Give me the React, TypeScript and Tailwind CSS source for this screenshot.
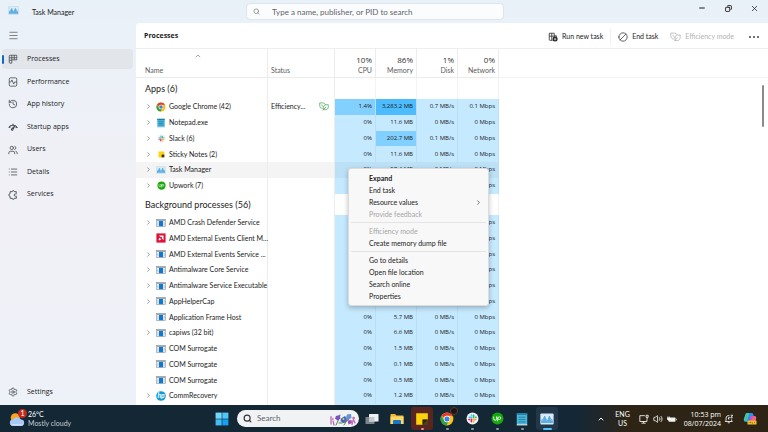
import type { ReactNode } from 'react';
import { clsx } from 'clsx';
import {
  Ban,
  ChevronRight,
  ChevronUp,
  Copy,
  History,
  List,
  Menu,
  Minus,
  Search,
  Settings,
  Users,
  Volume2,
  X,
} from 'lucide-react';

type Heat = 'low' | 'mid' | 'high';
type AppIcon = 'chrome' | 'notepad' | 'slack' | 'sticky' | 'taskmgr' | 'upwork' | 'exe' | 'amd' | 'hp';

interface Process {
  name: string;
  icon: AppIcon;
  expandable?: boolean;
  hovered?: boolean;
  status?: string;
  cpu?: string;
  memory: string;
  disk?: string;
  network?: string;
  cpuHeat?: Heat;
  memoryHeat?: Heat;
}

const APPS: Process[] = [
  {
    name: 'Google Chrome (42)',
    icon: 'chrome',
    expandable: true,
    status: 'Efficiency...',
    cpu: '1.4%',
    memory: '3,283.2 MB',
    disk: '0.7 MB/s',
    network: '0.1 Mbps',
    cpuHeat: 'mid',
    memoryHeat: 'high',
  },
  { name: 'Notepad.exe', icon: 'notepad', expandable: true, memory: '11.6 MB' },
  {
    name: 'Slack (6)',
    icon: 'slack',
    expandable: true,
    memory: '202.7 MB',
    disk: '0.1 MB/s',
    memoryHeat: 'mid',
  },
  { name: 'Sticky Notes (2)', icon: 'sticky', expandable: true, memory: '11.6 MB' },
  { name: 'Task Manager', icon: 'taskmgr', expandable: true, hovered: true, memory: '57.4 MB' },
  { name: 'Upwork (7)', icon: 'upwork', expandable: true, memory: '48.2 MB' },
];

const BACKGROUND: Process[] = [
  { name: 'AMD Crash Defender Service', icon: 'exe', expandable: true, memory: '0.5 MB' },
  { name: 'AMD External Events Client M...', icon: 'amd', memory: '1.6 MB' },
  { name: 'AMD External Events Service ...', icon: 'exe', expandable: true, memory: '0.6 MB' },
  { name: 'Antimalware Core Service', icon: 'exe', expandable: true, memory: '3.4 MB' },
  { name: 'Antimalware Service Executable', icon: 'exe', expandable: true, memory: '98.1 MB' },
  { name: 'AppHelperCap', icon: 'exe', expandable: true, memory: '2.1 MB' },
  { name: 'Application Frame Host', icon: 'exe', memory: '5.7 MB' },
  { name: 'capiws (32 bit)', icon: 'exe', expandable: true, memory: '6.6 MB' },
  { name: 'COM Surrogate', icon: 'exe', memory: '1.5 MB' },
  { name: 'COM Surrogate', icon: 'exe', memory: '0.1 MB' },
  { name: 'COM Surrogate', icon: 'exe', memory: '0.5 MB' },
  { name: 'CommRecovery', icon: 'hp', expandable: true, memory: '1.2 MB' },
];

const METRICS = [
  { label: 'CPU', total: '10%' },
  { label: 'Memory', total: '86%' },
  { label: 'Disk', total: '1%' },
  { label: 'Network', total: '0%' },
];

/* Icons */

interface IconProps {
  className?: string;
}

function ChromeIcon({ className }: IconProps) {
  return (
    <svg viewBox="0 0 24 24" className={className} aria-hidden="true">
      <circle cx="12" cy="12" r="11" fill="#fbc116" />
      <path d="M2.5 6.5A11 11 0 0 1 21.5 6.5H12a5.5 5.5 0 0 0-5 3.5z" fill="#e33b2e" />
      <path d="M2.5 6.5 7.2 14.7A5.5 5.5 0 0 0 14 17.1L11.2 23A11 11 0 0 1 2.5 6.5z" fill="#2ba24c" />
      <circle cx="12" cy="12" r="5.5" fill="#fff" />
      <circle cx="12" cy="12" r="4.3" fill="#3b7ded" />
    </svg>
  );
}

function NotepadIcon({ className }: IconProps) {
  return (
    <svg viewBox="0 0 24 24" className={className} aria-hidden="true">
      <rect x="3" y="2" width="18" height="20" rx="1" fill="#4bb5da" />
      <rect x="3" y="2" width="18" height="3" fill="#1f7fa8" />
      <path d="M6 9h12M6 13h12M6 17h12" stroke="#1f7f9f" strokeWidth="1.6" />
      <path d="M3 22h18" stroke="#d9e8ee" strokeWidth="2" />
    </svg>
  );
}

function SlackIcon({ className }: IconProps) {
  return (
    <svg viewBox="0 0 24 24" className={className} aria-hidden="true">
      <circle cx="12" cy="12" r="11" fill="#f4f1f4" />
      <g strokeWidth="3" strokeLinecap="round">
        <path d="M6 10h4.5" stroke="#36c5f0" />
        <path d="M10 5.5v.5" stroke="#36c5f0" />
        <path d="M14 6v4.5" stroke="#2eb67d" />
        <path d="M18.5 10h-.5" stroke="#2eb67d" />
        <path d="M18 14h-4.5" stroke="#ecb22e" />
        <path d="M14 18.5v-.5" stroke="#ecb22e" />
        <path d="M10 18v-4.5" stroke="#e01e5a" />
        <path d="M5.5 14h.5" stroke="#e01e5a" />
      </g>
    </svg>
  );
}

function StickyIcon({ className }: IconProps) {
  return (
    <svg viewBox="0 0 24 24" className={className} aria-hidden="true">
      <path d="M2 2h20v11l-9 9H2z" fill="#fdd20b" />
      <path d="M13 22v-9h9v9z" fill="#4d4318" />
      <path d="M13 22v-9h9z" fill="#2c270f" />
    </svg>
  );
}

function TaskManagerIcon({ className }: IconProps) {
  return (
    <svg viewBox="0 0 24 20" className={className} aria-hidden="true">
      <rect x="1" y="1" width="22" height="18" rx="1" fill="#d9edf9" stroke="#b3cbd9" />
      <path d="M2 17v-4l3-1 3-6 3 7 2 1 3-8 3 6 3 1v4z" fill="#58b0e6" />
      <path d="M2 12l3-1 3-6 3 7 2 1 3-8 3 6 3 1" fill="none" stroke="#2a86c9" />
    </svg>
  );
}

function UpworkIcon({ className }: IconProps) {
  return (
    <svg viewBox="0 0 24 24" className={className} aria-hidden="true">
      <circle cx="12" cy="12" r="11" fill="#17a80c" />
      <path
        d="M5 8.5v4a2.7 2.7 0 0 0 5.4 0v-4c1.2 3.3 2.6 5.3 5 5.3a2.5 2.5 0 1 0-2.5-2.5l-1 6"
        fill="none"
        stroke="#fff"
        strokeWidth="1.6"
      />
    </svg>
  );
}

function ExeIcon({ className }: IconProps) {
  return (
    <svg viewBox="0 0 24 20" className={className} aria-hidden="true">
      <rect x="1" y="1" width="22" height="18" fill="#e8edf0" stroke="#8c979e" strokeWidth="1.5" />
      <path d="M1 3h22" stroke="#8c979e" strokeWidth="3" />
      <rect x="7" y="5" width="10" height="13" fill="#0e78d4" />
      <path d="M4 8v8M20 8v8" stroke="#b6c0c6" strokeWidth="2" />
    </svg>
  );
}

function AmdIcon({ className }: IconProps) {
  return (
    <svg viewBox="0 0 24 24" className={className} aria-hidden="true">
      <rect x="1" y="1" width="22" height="22" fill="#e0103a" />
      <path d="M7 6h11v11l-3.5-3.5v-4h-4z" fill="#fff" />
      <path d="M10 10.5 6.5 14v3.5H10l3.5-3.5H10z" fill="#fff" />
    </svg>
  );
}

function HpIcon({ className }: IconProps) {
  return (
    <svg viewBox="0 0 24 24" className={className} aria-hidden="true">
      <circle cx="12" cy="12" r="11.5" fill="#0f9ad8" />
      <text x="12" y="17" textAnchor="middle" fontSize="16" fontStyle="italic" fontWeight="700" fill="#fff">
        hp
      </text>
    </svg>
  );
}

function LeafIcon({ className }: IconProps) {
  return (
    <svg
      viewBox="0 0 28 24"
      className={className}
      fill="none"
      stroke="currentColor"
      strokeWidth="2"
      strokeLinejoin="round"
      aria-hidden="true"
    >
      <path d="M11 17H9c-5 0-7-4-7-8V2h8c4 0 7 2 8 5" />
      <path d="M26 7v6c0 5-3 8-7 8h-6v-6c0-5 2-8 7-8z" />
      <path d="M10 23l10-10M6 7l7 6" />
    </svg>
  );
}

function ProcessesIcon({ className }: IconProps) {
  return (
    <svg
      viewBox="0 0 24 24"
      className={className}
      fill="none"
      stroke="currentColor"
      strokeWidth="2"
      aria-hidden="true"
    >
      <path d="M3 5a2 2 0 0 1 2-2h16v11H9v8H5a2 2 0 0 1-2-2z" />
      <path d="M9 3v11M3 9h18M15 3v11M3 15h6" />
    </svg>
  );
}

function PerformanceIcon({ className }: IconProps) {
  return (
    <svg
      viewBox="0 0 24 24"
      className={className}
      fill="none"
      stroke="currentColor"
      strokeWidth="2"
      aria-hidden="true"
    >
      <rect x="3" y="2" width="18" height="20" rx="3" />
      <path d="M3 12h4l2.5-5 4 10 2.5-5h5" />
    </svg>
  );
}

function StartupIcon({ className }: IconProps) {
  return (
    <svg
      viewBox="0 0 24 24"
      className={className}
      fill="none"
      stroke="currentColor"
      strokeWidth="2.5"
      aria-hidden="true"
    >
      <path d="M2 13a11 9 0 0 1 20 0l-4 1" />
      <path d="M2 13l4-1M12 4v4M12 18l4-8-6 5.5a2 2 0 1 0 2 2.5z" />
    </svg>
  );
}

function ServicesIcon({ className }: IconProps) {
  return (
    <svg
      viewBox="0 0 24 24"
      className={className}
      fill="none"
      stroke="currentColor"
      strokeWidth="2.2"
      aria-hidden="true"
    >
      <path d="M20 7V4h-5a2.5 2.5 0 0 0-5 0H5v5a3 3 0 0 0 0 6v5h5a2.5 2.5 0 0 0 5 0h5v-4" />
      <path d="M21 9h-3a3 3 0 0 0 0 6h3" />
    </svg>
  );
}

function RunTaskIcon({ className }: IconProps) {
  return (
    <svg viewBox="0 0 24 24" className={className} aria-hidden="true">
      <path
        d="M11 20H5a2 2 0 0 1-2-2V3h12v6h5v3M9 3v17M3 10h12M15 9v3"
        fill="none"
        stroke="#333"
        strokeWidth="2"
      />
      <circle cx="17" cy="17" r="6" fill="#222" />
      <path d="M17 14v6M14 17h6" stroke="#fff" strokeWidth="1.5" />
    </svg>
  );
}

function WeatherIcon({ className }: IconProps) {
  return (
    <svg viewBox="0 0 28 28" className={className} aria-hidden="true">
      <circle cx="11" cy="12" r="8" fill="#f6a61f" />
      <path d="M7 26a5.5 5.5 0 0 1 0-11 8 8 0 0 1 14 0 5.5 5.5 0 0 1 0 11z" fill="#a9c9f7" />
      <path d="M3 23a5 5 0 0 0 4 3h14a5 5 0 0 0 4-3z" fill="#d3e3fb" />
    </svg>
  );
}

function WindowsIcon({ className }: IconProps) {
  return (
    <svg viewBox="0 0 24 24" className={className} aria-hidden="true">
      <path d="M1 1h10.5v10.5H1z" fill="#6fd8fb" />
      <path d="M12.5 1H23v10.5H12.5z" fill="#4fc6f8" />
      <path d="M1 12.5h10.5V23H1z" fill="#43bbf5" />
      <path d="M12.5 12.5H23V23H12.5z" fill="#189ff0" />
    </svg>
  );
}

function FlowersIcon({ className }: IconProps) {
  return (
    <svg viewBox="0 0 56 28" className={className} aria-hidden="true">
      <g fill="none" strokeLinecap="round">
        <path d="M4 24V9M10 26l-2-8M46 25l4-14M52 22l-2-5" stroke="#b66bc0" strokeWidth="2.5" />
        <path d="M14 26c4-8 6-12 8-20M30 26c4-6 8-12 8-20M20 22c8 1 14-2 20-8" stroke="#4f7a4a" strokeWidth="2" />
      </g>
      <path d="M14 8l7-2 2 7-6 4-5-4z" fill="#7a52c0" />
      <path d="M24 13l8-5 4 6-5 7-8-2z" fill="#3f63c8" />
      <path d="M36 5l8-1 1 8-6 3-5-4z" fill="#6a8fdc" />
      <path d="M37 17l8-1 1 6-7 3z" fill="#a24fb4" />
      <circle cx="29" cy="14" r="2" fill="#f0d34c" />
      <circle cx="7" cy="14" r="2.5" fill="#e18ab9" />
      <circle cx="49" cy="12" r="2.5" fill="#cf6aa8" />
    </svg>
  );
}

function TaskViewIcon({ className }: IconProps) {
  return (
    <svg viewBox="0 0 28 24" className={className} aria-hidden="true">
      <rect x="1" y="8" width="18" height="14" rx="1" fill="#7d858b" />
      <rect x="8" y="2" width="19" height="15" rx="1" fill="#eef1f3" />
      <path d="M8 8h11v9H8z" fill="#c3c8cc" />
    </svg>
  );
}

function ExplorerIcon({ className }: IconProps) {
  return (
    <svg viewBox="0 0 28 24" className={className} aria-hidden="true">
      <path d="M1 3a1 1 0 0 1 1-1h8l3 3h13a1 1 0 0 1 1 1v16H1z" fill="#f1b52f" />
      <path d="M1 7h26v15H1z" fill="#fcd667" />
      <path d="M6 22v-6a2 2 0 0 1 2-2h12a2 2 0 0 1 2 2v6z" fill="#1976c5" />
    </svg>
  );
}

function MonitorIcon({ className }: IconProps) {
  return (
    <svg
      viewBox="0 0 24 24"
      className={className}
      fill="none"
      stroke="currentColor"
      strokeWidth="2"
      aria-hidden="true"
    >
      <path d="M14 4H2v14h17v-5M6 22h10M11 18v4" />
      <path d="M17 3h5v5h-5zM19.5 8v5" />
    </svg>
  );
}

function BatteryIcon({ className }: IconProps) {
  return (
    <svg viewBox="0 0 26 20" className={className} aria-hidden="true">
      <rect x="4" y="6" width="18" height="11" rx="2" fill="#f2f2f2" />
      <path d="M23 9.5h2v4h-2z" fill="#f2f2f2" />
      <path d="M2 3v4M6 3v4M1 7h6v3a3 3 0 0 1-6 0z" fill="#fff" stroke="#fff" strokeWidth="1.5" />
    </svg>
  );
}

function BellIcon({ className }: IconProps) {
  return (
    <svg
      viewBox="0 0 24 24"
      className={className}
      fill="none"
      stroke="currentColor"
      strokeWidth="2"
      aria-hidden="true"
    >
      <path d="M13 4a6 6 0 0 0-8 6v5l-2 3h17l-2-3v-2M9 21h5" />
      <path d="M16 3h5l-5 6h5M10 8h3l-3 4h3" />
    </svg>
  );
}

function CopilotIcon({ className }: IconProps) {
  return (
    <svg viewBox="0 0 28 26" className={className} aria-hidden="true">
      <path d="M8 2h9c2 0 3 1 3.5 3L22 9h-7l-4 11H6c-4 0-5-3-4-6l3-9c.5-2 1.500-3 3-3z" fill="#2a8ef0" />
      <path d="M2 13l3-8c.5-2 1.500-3 3-3h5L8 18H5c-3 0-4-2-3-5z" fill="#3fc6a0" />
      <path d="M14 8h8c4 0 5 3 4 6l-3 7c-.8 2-2 3-4 3h-8z" fill="#c252d8" />
      <path d="M20 8h2c4 0 5 3 4 6l-1 3h-8z" fill="#f3637c" />
      <rect x="9" y="17" width="18" height="8" rx="1" fill="#f6c32c" />
      <path d="M12 19.5v3M15 19.5v3M18 19.5v3h2M23 19.5v3" stroke="#7b5a05" strokeWidth="1.3" fill="none" />
    </svg>
  );
}

function ProcessIcon({ icon }: { icon: AppIcon }) {
  switch (icon) {
    case 'chrome':
      return <ChromeIcon className="size-[10px]" />;
    case 'notepad':
      return <NotepadIcon className="size-[10px]" />;
    case 'slack':
      return <SlackIcon className="size-[9px]" />;
    case 'sticky':
      return <StickyIcon className="size-[7px]" />;
    case 'taskmgr':
      return <TaskManagerIcon className="h-2 w-[10px]" />;
    case 'upwork':
      return <UpworkIcon className="size-[9px]" />;
    case 'amd':
      return <AmdIcon className="size-[10px]" />;
    case 'hp':
      return <HpIcon className="size-[10px]" />;
    default:
      return <ExeIcon className="h-2 w-[10px]" />;
  }
}

/* Window chrome */

function TitleBar() {
  return (
    <header className="flex h-[23px] shrink-0 items-start">
      <div className="flex h-5 w-[246px] shrink-0 items-center pl-2">
        <TaskManagerIcon className="h-[9px] w-[11px]" />
        <h1 className="pt-1 pl-[13px] text-[7px]">Task Manager</h1>
      </div>
      <label className="mt-[3px] flex h-[17px] w-[258px] items-center rounded-sm border border-[#dfe5ea] bg-[#fbfcfd] pl-1.5">
        <Search className="size-[7px] text-[#666]" strokeWidth={2} />
        <input
          type="text"
          aria-label="Search processes"
          placeholder="Type a name, publisher, or PID to search"
          className="ml-3 min-w-0 flex-1 bg-transparent text-[8px] outline-none placeholder:text-[#5f6368]"
        />
      </label>
      <div className="ml-auto flex h-4 items-center pr-px">
        <button type="button" aria-label="Minimize" className="flex w-[26px] justify-center">
          <Minus className="size-2" strokeWidth={3} />
        </button>
        <button type="button" aria-label="Restore" className="flex w-[26px] justify-center">
          <Copy className="size-[7px] -scale-x-100" strokeWidth={3} />
        </button>
        <button type="button" aria-label="Close" className="flex w-[26px] justify-center">
          <X className="size-[9px]" strokeWidth={2} />
        </button>
      </div>
    </header>
  );
}

function NavItem({ icon, label, active }: { icon: ReactNode; label: string; active?: boolean }) {
  return (
    <button
      type="button"
      aria-current={active ? 'page' : undefined}
      className={clsx('flex h-5 w-full items-center rounded-[3px]', active && 'bg-[#e2e6eb]')}
    >
      <span className={clsx('h-[9px] w-0.5 rounded-full', active && 'bg-[#1467c0]')} />
      <span className="flex w-[18px] justify-center text-[#4a4f55]">{icon}</span>
      <span className="pl-[5px] font-['Open_Sans','Noto_Sans',sans-serif] text-[7px]">{label}</span>
    </button>
  );
}

function Sidebar() {
  return (
    <nav aria-label="Pages" className="flex w-[136px] shrink-0 flex-col pr-[3px] pl-0.5">
      <button type="button" aria-label="Toggle navigation" className="flex h-[25px] w-[22px] items-center justify-center">
        <Menu className="size-[11px] text-[#777]" strokeWidth={2} />
      </button>
      <div className="grid h-[158px] auto-rows-fr items-center">
        <NavItem icon={<ProcessesIcon className="size-[10px]" />} label="Processes" active />
        <NavItem icon={<PerformanceIcon className="size-[10px]" />} label="Performance" />
        <NavItem icon={<History className="size-[10px]" />} label="App history" />
        <NavItem icon={<StartupIcon className="size-[10px]" />} label="Startup apps" />
        <NavItem icon={<Users className="size-[10px]" />} label="Users" />
        <NavItem icon={<List className="size-[10px]" />} label="Details" />
        <NavItem icon={<ServicesIcon className="size-[10px]" />} label="Services" />
      </div>
      <div className="mt-auto pb-[3px]">
        <NavItem icon={<Settings className="size-[10px]" />} label="Settings" />
      </div>
    </nav>
  );
}

function Toolbar() {
  return (
    <div className="flex h-[26px] shrink-0 items-center border-b border-[#eceeef] px-2 pt-0.5">
      <h2 className="font-['Open_Sans','Noto_Sans',sans-serif] text-[7px] font-bold">Processes</h2>
      <div className="ml-auto flex items-center text-[7px]">
        <button type="button" className="flex items-center gap-1">
          <RunTaskIcon className="size-[10px]" />
          Run new task
        </button>
        <span className="mx-[7px] h-4 w-px bg-[#f0f0f0]" />
        <button type="button" className="flex items-center gap-1">
          <Ban className="size-[10px] -scale-x-100 text-[#444]" />
          End task
        </button>
        <button type="button" disabled className="ml-3 flex items-center gap-1 text-[#b3b3b3]">
          <LeafIcon className="h-[10px] w-[11px]" />
          Efficiency mode
        </button>
        <button type="button" aria-label="More options" className="ml-3.5 flex w-3 justify-center gap-0.5">
          <span className="size-0.5 rounded-full bg-[#444]" />
          <span className="size-0.5 rounded-full bg-[#444]" />
          <span className="size-0.5 rounded-full bg-[#444]" />
        </button>
      </div>
    </div>
  );
}

/* Process table */

function MetricCell({ value, heat = 'low', hovered }: { value: string; heat?: Heat; hovered?: boolean }) {
  return (
    <td
      className={clsx(
        "border-r border-[#bcdff4] pr-[3px] text-right font-['Open_Sans','Noto_Sans',sans-serif] text-[6px] font-medium whitespace-nowrap",
        heat === 'high' && 'bg-[#4cbcff]',
        heat === 'mid' && 'bg-[#82d0ff]',
        heat === 'low' && (hovered ? 'bg-[#bce0f5]' : 'bg-[#c5e9ff]'),
      )}
    >
      {value}
    </td>
  );
}

function ProcessRow({ process }: { process: Process }) {
  const { hovered } = process;
  return (
    <tr className="h-[15px]">
      <td className={clsx('border-r border-[#ececec]', hovered && 'bg-[#f4f4f4]')}>
        <div className="flex items-center pl-2">
          <span className="flex w-2 shrink-0 justify-center">
            {process.expandable && (
              <button type="button" aria-label={`Expand ${process.name}`}>
                <ChevronRight className="size-[7px] text-[#555]" strokeWidth={2} />
              </button>
            )}
          </span>
          <span className="ml-[3px] flex w-3 shrink-0 justify-center">
            <ProcessIcon icon={process.icon} />
          </span>
          <span className="ml-0.5 whitespace-nowrap">{process.name}</span>
        </div>
      </td>
      <td className={clsx('border-r border-[#ececec]', hovered && 'bg-[#f4f4f4]')}>
        {process.status && (
          <div className="flex items-center justify-between pr-[5px] pl-[3px]">
            {process.status}
            <LeafIcon className="h-[9px] w-[10px] text-[#3fa34a]" />
          </div>
        )}
      </td>
      <MetricCell value={process.cpu ?? '0%'} heat={process.cpuHeat} hovered={hovered} />
      <MetricCell value={process.memory} heat={process.memoryHeat} hovered={hovered} />
      <MetricCell value={process.disk ?? '0 MB/s'} hovered={hovered} />
      <MetricCell value={process.network ?? '0 Mbps'} hovered={hovered} />
      <td />
    </tr>
  );
}

function GroupRow({ label }: { label: string }) {
  return (
    <tr className="h-5">
      <th scope="rowgroup" className="border-r border-[#ececec] pl-[9px] text-left text-[9px] font-normal whitespace-nowrap">
        {label}
      </th>
      <td className="border-r border-[#ececec]" />
      {METRICS.map((metric) => (
        <td key={metric.label} className="border-r border-[#f3f3f3]" />
      ))}
      <td />
    </tr>
  );
}

function ProcessTable() {
  return (
    <table className="h-full w-full table-fixed border-separate border-spacing-0 text-[7px] leading-[9px]">
      <colgroup>
        <col className="w-[132px]" />
        <col className="w-[67px]" />
        <col className="w-[41px]" />
        <col className="w-[41px]" />
        <col className="w-[41px]" />
        <col className="w-[41px]" />
        <col />
      </colgroup>
      <thead>
        <tr className="h-[29px] text-[#5c5c5c]">
          <th scope="col" className="border-r border-b border-[#ececec] pb-0.5 pl-[9px] text-left align-bottom font-normal">
            <button type="button" className="flex w-full flex-col items-start gap-1.5">
              <ChevronUp className="ml-[49px] size-2 text-[#777]" strokeWidth={2} />
              Name
            </button>
          </th>
          <th scope="col" className="border-r border-b border-[#ececec] pb-0.5 pl-[3px] text-left align-bottom font-normal">
            Status
          </th>
          {METRICS.map((metric) => (
            <th
              key={metric.label}
              scope="col"
              className="border-r border-b border-[#ececec] pr-[3px] pb-0.5 text-right align-bottom font-normal"
            >
              <span className="block pb-0.5 font-['Open_Sans','Noto_Sans',sans-serif] text-[8px] text-[#333]">
                {metric.total}
              </span>
              {metric.label}
            </th>
          ))}
          <th className="border-b border-[#f3f3f3]" aria-label="Empty" />
        </tr>
      </thead>
      <tbody>
        <GroupRow label="Apps (6)" />
        {APPS.map((process) => (
          <ProcessRow key={process.name} process={process} />
        ))}
        <GroupRow label="Background processes (56)" />
        {BACKGROUND.map((process, index) => (
          <ProcessRow key={index} process={process} />
        ))}
        <tr className="h-px">
          <td className="border-r border-[#ececec]" />
          <td className="border-r border-[#ececec]" />
          <td colSpan={4} className="bg-[#c5e9ff]" />
          <td />
        </tr>
      </tbody>
    </table>
  );
}

function MenuItem({ label, bold, disabled, submenu }: { label: string; bold?: boolean; disabled?: boolean; submenu?: boolean }) {
  return (
    <button
      type="button"
      role="menuitem"
      disabled={disabled}
      className={clsx(
        'flex h-3 w-full items-center justify-between pr-1.5 pl-5',
        bold && 'font-bold',
        disabled && 'text-[#a5a5a5]',
      )}
    >
      {label}
      {submenu && <ChevronRight className="size-[7px]" />}
    </button>
  );
}

function ContextMenu() {
  return (
    <div
      role="menu"
      className="absolute top-[119px] left-[212px] w-[141px] rounded-[3px] border border-[#dcdcdc] bg-[#f8f8f8] py-[3px] text-[7px] shadow-[0_2px_5px_rgba(0,0,0,0.25)]"
    >
      <MenuItem label="Expand" bold />
      <MenuItem label="End task" />
      <MenuItem label="Resource values" submenu />
      <MenuItem label="Provide feedback" disabled />
      <hr className="mx-0.5 my-0.5 border-[#e4e4e4]" />
      <MenuItem label="Efficiency mode" disabled />
      <MenuItem label="Create memory dump file" />
      <hr className="mx-0.5 my-0.5 border-[#e4e4e4]" />
      <MenuItem label="Go to details" />
      <MenuItem label="Open file location" />
      <MenuItem label="Search online" />
      <MenuItem label="Properties" />
    </div>
  );
}

/* Taskbar */

interface TaskbarButtonProps {
  label: string;
  children: ReactNode;
  className?: string;
  indicator?: string;
}

function TaskbarButton({ label, children, className, indicator }: TaskbarButtonProps) {
  return (
    <button
      type="button"
      aria-label={label}
      className={clsx('relative flex h-[23px] w-[22px] items-center justify-center rounded-[3px]', className)}
    >
      {children}
      {indicator && <span className={clsx('absolute bottom-0 h-0.5 rounded-full', indicator)} />}
    </button>
  );
}

function Taskbar() {
  return (
    <footer className="flex h-[27px] shrink-0 items-center bg-linear-to-r from-[#142735] from-70% via-[#142736] via-75% to-[#2d2415] to-82% text-[7px] leading-[9px] text-white">
      <button type="button" className="flex w-[211px] shrink-0 items-center gap-[3px] pl-[9px] text-left">
        <span className="relative">
          <WeatherIcon className="size-4" />
          <span className="absolute -top-0.5 -right-0.5 flex size-[9px] items-center justify-center rounded-full bg-[#c42b1c]">
            1
          </span>
        </span>
        <span>
          <span className="block">26°C</span>
          <span className="block text-[#c4ccd2]">Mostly cloudy</span>
        </span>
      </button>
      <TaskbarButton label="Start">
        <WindowsIcon className="size-[14px]" />
      </TaskbarButton>
      <label className="ml-1 flex h-[17px] w-[122px] items-center rounded-full bg-[#f0f2f3] pr-0.5 pl-1.5">
        <Search className="size-[9px] text-[#333]" strokeWidth={3} />
        <input
          type="text"
          aria-label="Search Windows"
          placeholder="Search"
          className="ml-[5px] min-w-0 flex-1 bg-transparent text-[8px] outline-none placeholder:text-[#5f6368]"
        />
        <FlowersIcon className="h-[14px] w-7" />
      </label>
      <div className="ml-0.5 flex gap-[3px]">
        <TaskbarButton label="Task view">
          <TaskViewIcon className="h-3 w-[14px]" />
        </TaskbarButton>
        <TaskbarButton label="File Explorer">
          <ExplorerIcon className="h-3 w-[14px]" />
        </TaskbarButton>
        <TaskbarButton label="Sticky Notes" className="bg-[#58261f]" indicator="w-[3px] bg-[#f08a90]">
          <StickyIcon className="size-[14px]" />
        </TaskbarButton>
        <TaskbarButton label="Google Chrome" indicator="w-[3px] bg-[#8e989f]">
          <ChromeIcon className="size-[14px]" />
          <span className="absolute top-0 right-0 h-2 w-2 rounded-full border border-[#5b3a2c] bg-[#1d1512]" />
        </TaskbarButton>
        <TaskbarButton label="Slack" indicator="w-[3px] bg-[#8e989f]">
          <SlackIcon className="size-[13px]" />
        </TaskbarButton>
        <TaskbarButton label="Upwork" indicator="w-[3px] bg-[#8e989f]">
          <UpworkIcon className="size-[13px]" />
        </TaskbarButton>
        <TaskbarButton label="Notepad" indicator="w-[3px] bg-[#8e989f]">
          <NotepadIcon className="size-[14px]" />
        </TaskbarButton>
        <TaskbarButton label="Task Manager" className="bg-[#22384a]" indicator="w-[9px] bg-[#4cc2ff]">
          <TaskManagerIcon className="h-3 w-[14px]" />
        </TaskbarButton>
      </div>
      <div className="ml-auto flex items-center pr-[11px]">
        <button type="button" aria-label="Show hidden icons">
          <ChevronUp className="size-2" strokeWidth={3} />
        </button>
        <button type="button" className="ml-2.5 text-center">
          <span className="block">ENG</span>
          <span className="block">US</span>
        </button>
        <button type="button" aria-label="Network, volume and battery" className="ml-[9px] flex items-center gap-1">
          <MonitorIcon className="size-[10px]" />
          <Volume2 className="size-[10px]" strokeWidth={2} />
          <BatteryIcon className="h-2 w-[10px]" />
        </button>
        <button type="button" className="ml-[7px] text-right font-['Open_Sans','Noto_Sans',sans-serif]">
          <time dateTime="2024-07-08T22:53" className="block">
            <span className="block">10:53 pm</span>
            <span className="block">08/07/2024</span>
          </time>
        </button>
        <button type="button" aria-label="Notifications" className="ml-[3px]">
          <BellIcon className="size-[10px]" />
        </button>
        <button type="button" aria-label="Copilot" className="ml-[9px]">
          <CopilotIcon className="h-[13px] w-[14px]" />
        </button>
      </div>
    </footer>
  );
}

export default function App() {
  return (
    <div className="flex h-screen flex-col overflow-hidden font-['Lato','Noto_Sans',sans-serif] text-[#1b1b1b]">
      <div className="flex min-h-0 flex-1 flex-col bg-linear-to-b from-[#e9f1f8] via-[#f1f0f6] to-[#edf1f8]">
        <TitleBar />
        <div className="flex min-h-0 flex-1">
          <Sidebar />
          <main className="flex min-w-0 flex-1 flex-col rounded-tl-[4px] bg-white">
            <Toolbar />
            <div className="relative min-h-0 flex-1">
              <ProcessTable />
              <ContextMenu />
              <div className="absolute top-9 right-1 h-[42px] w-0.5 rounded-full bg-[#8b8b8b]" />
            </div>
          </main>
        </div>
      </div>
      <Taskbar />
    </div>
  );
}
